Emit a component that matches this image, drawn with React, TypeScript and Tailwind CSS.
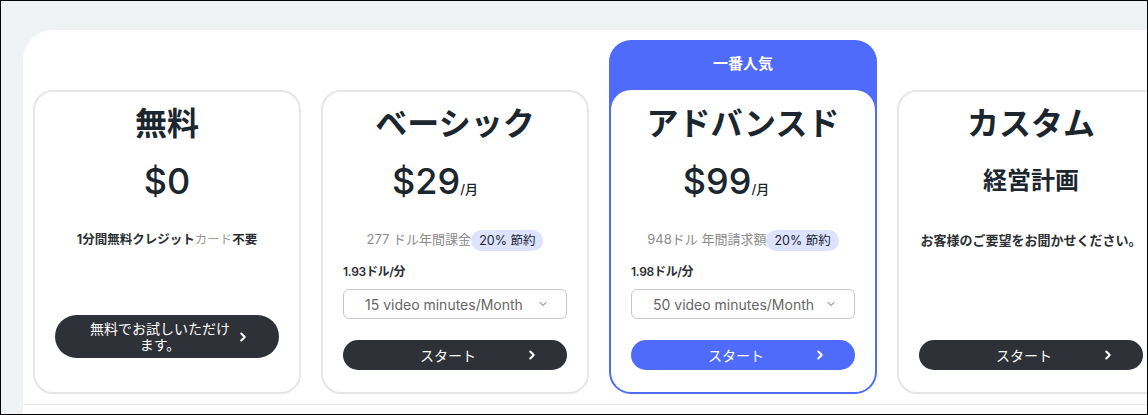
import { ChevronDown, ChevronRight } from 'lucide-react';

const FONT = "font-['Inter','Noto_Sans_CJK_JP',sans-serif]";

type Plan = {
  name: string;
  price: string;
  shift: string;
  annual: string;
  perMin: string;
  minutes: string;
  featured?: boolean;
};

const PLANS: Plan[] = [
  {
    name: 'ベーシック',
    price: '$29',
    shift: 'mr-[40px]',
    annual: '277 ドル年間課金',
    perMin: '1.93ドル/分',
    minutes: '15 video minutes/Month',
  },
  {
    name: 'アドバンスド',
    price: '$99',
    shift: 'mr-[34px]',
    annual: '948ドル 年間請求額',
    perMin: '1.98ドル/分',
    minutes: '50 video minutes/Month',
    featured: true,
  },
];

export default function App() {
  return (
    <div className={`${FONT} h-[415px] w-[1148px] overflow-hidden border border-black bg-[#eff3f4] text-[#1c262e]`}>
      <div className="ml-[22px] mt-[29px] h-[400px] rounded-tl-[30px] bg-white pt-[10px]">
        <div className="flex items-end gap-[20px] pl-[10px]">
          <FreeCard />
          {PLANS.map((p) =>
            p.featured ? (
              <div key={p.name} className="w-[268px] shrink-0 rounded-[22px] bg-[#4f6bfc] p-[2px]">
                <div className="flex h-[48px] items-center justify-center pb-[4px] text-[15px] font-bold text-white">一番人気</div>
                <div className="h-[302px] rounded-[20px] bg-white pt-[2px]">
                  <PaidBody plan={p} />
                </div>
              </div>
            ) : (
              <div key={p.name} className="h-[304px] w-[268px] shrink-0 rounded-[20px] border-2 border-[#e6e6e6] bg-white">
                <PaidBody plan={p} />
              </div>
            ),
          )}
          <CustomCard />
        </div>
        <div className="mt-[10px] border-t border-[#e8e8e8]" />
      </div>
    </div>
  );
}

function Title({ children }: { children: string }) {
  return <h2 className="h-[40px] text-center text-[32px] font-bold leading-[40px]">{children}</h2>;
}

function StartButton({ featured }: { featured?: boolean }) {
  const bg = featured ? 'bg-[#4f6bfc]' : 'bg-[#2e3137]';
  return (
    <button className={`flex h-[30px] w-full items-center rounded-full px-[28px] text-[14px] text-white ${bg}`}>
      <span className="flex-1 text-center">スタート</span>
      <ChevronRight size={14} strokeWidth={3.5} />
    </button>
  );
}

function FreeCard() {
  return (
    <div className="flex h-[304px] w-[268px] shrink-0 flex-col rounded-[20px] border-2 border-[#e6e6e6] bg-white px-[20px] pt-[12px]">
      <Title>無料</Title>
      <div className="mt-[15px] h-[44px] text-center text-[36px] font-medium leading-[44px]">$0</div>
      <p className="mt-[26px] h-[22px] text-center text-[12.5px] font-bold leading-[22px] text-[#2b2f33]">
        1分間無料クレジット<span className="font-normal text-[#9a9a9a]">カード</span>不要
      </p>
      <button className="mt-[64px] flex h-[43px] w-full items-center rounded-full bg-[#2e3137] pl-[32px] pr-[29px] text-[14px] leading-[16px] text-white">
        <span className="w-[146px] text-center">無料でお試しいただけます。</span>
        <span className="flex-1" />
        <ChevronRight size={14} strokeWidth={3.5} />
      </button>
    </div>
  );
}

function PaidBody({ plan }: { plan: Plan }) {
  return (
    <div className="flex flex-col px-[20px] pt-[12px]">
      <Title>{plan.name}</Title>
      <div className="mt-[15px] flex h-[44px] items-baseline justify-center">
        <div className={`flex items-baseline ${plan.shift}`}>
          <span className="text-[36px] font-medium leading-[44px]">{plan.price}</span>
          <span className="text-[13px] font-medium">/月</span>
        </div>
      </div>
      <div className="mt-[26px] flex h-[22px] items-center justify-center">
        <span className="text-[13px] text-[#8c8c8c]">{plan.annual}</span>
        <span className="rounded-full bg-[#dde3fe] px-[8px] text-[12.5px] leading-[21px] text-[#1c262e]">20% 節約</span>
      </div>
      <div className="mt-[13px] h-[16px] text-[12px] font-semibold leading-[16px] tracking-[-0.3px] text-[#2b2f33]">{plan.perMin}</div>
      <div className="mt-[9px] flex h-[30px] items-center justify-between rounded-[6px] border border-[#c8c8c8] pl-[21px] pr-[17px] text-[14px] text-[#666]">
        <span>{plan.minutes}</span>
        <ChevronDown size={12} strokeWidth={1.8} className="text-[#555]" />
      </div>
      <div className="mt-[21px]">
        <StartButton featured={plan.featured} />
      </div>
    </div>
  );
}

function CustomCard() {
  return (
    <div className="flex h-[304px] w-[268px] shrink-0 flex-col rounded-[20px] border-2 border-[#e6e6e6] bg-white px-[20px] pt-[12px]">
      <Title>カスタム</Title>
      <div className="mt-[15px] h-[44px] text-center text-[24px] font-bold leading-[44px]">経営計画</div>
      <p className="mt-[26px] h-[22px] text-center text-[13px] font-bold leading-[22px] text-[#2b2f33]">お客様のご要望をお聞かせください。</p>
      <div className="mt-[89px]">
        <StartButton />
      </div>
    </div>
  );
}
